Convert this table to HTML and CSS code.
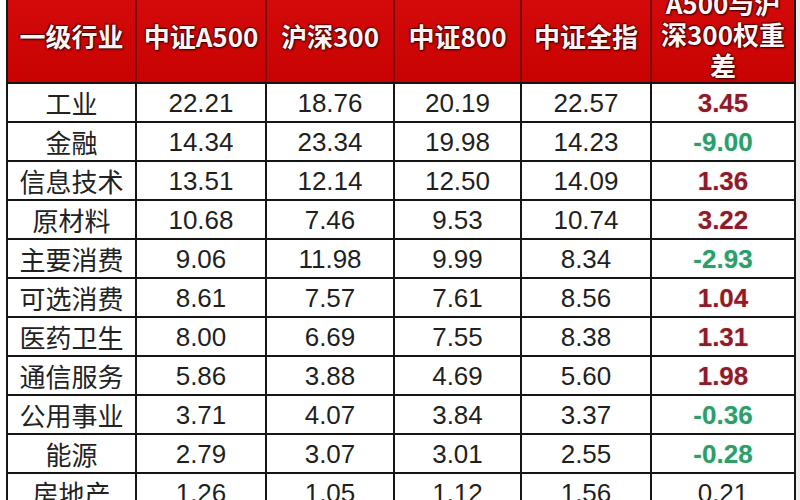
FILE: index.html
```html
<!DOCTYPE html>
<html lang="zh">
<head>
<meta charset="utf-8">
<link rel="stylesheet" href="styles.css">
</head>
<body>
<div class="page">
<table class="grid">
<colgroup>
<col class="c1"><col class="c2"><col class="c3"><col class="c4"><col class="c5"><col class="c6">
</colgroup>
<thead>
<tr>
<th><div class="hd">一级行业</div></th>
<th><div class="hd">中证A500</div></th>
<th><div class="hd">沪深300</div></th>
<th><div class="hd">中证800</div></th>
<th><div class="hd">中证全指</div></th>
<th><div class="hd multi">A500与沪<br>深300权重<br>差</div></th>
</tr>
</thead>
<tbody>
<tr><td>工业</td><td>22.21</td><td>18.76</td><td>20.19</td><td>22.57</td><td class="pos">3.45</td></tr>
<tr><td>金融</td><td>14.34</td><td>23.34</td><td>19.98</td><td>14.23</td><td class="neg">-9.00</td></tr>
<tr><td>信息技术</td><td>13.51</td><td>12.14</td><td>12.50</td><td>14.09</td><td class="pos">1.36</td></tr>
<tr><td>原材料</td><td>10.68</td><td>7.46</td><td>9.53</td><td>10.74</td><td class="pos">3.22</td></tr>
<tr><td>主要消费</td><td>9.06</td><td>11.98</td><td>9.99</td><td>8.34</td><td class="neg">-2.93</td></tr>
<tr><td>可选消费</td><td>8.61</td><td>7.57</td><td>7.61</td><td>8.56</td><td class="pos">1.04</td></tr>
<tr><td>医药卫生</td><td>8.00</td><td>6.69</td><td>7.55</td><td>8.38</td><td class="pos">1.31</td></tr>
<tr><td>通信服务</td><td>5.86</td><td>3.88</td><td>4.69</td><td>5.60</td><td class="pos">1.98</td></tr>
<tr><td>公用事业</td><td>3.71</td><td>4.07</td><td>3.84</td><td>3.37</td><td class="neg">-0.36</td></tr>
<tr><td>能源</td><td>2.79</td><td>3.07</td><td>3.01</td><td>2.55</td><td class="neg">-0.28</td></tr>
<tr><td>房地产</td><td>1.26</td><td>1.05</td><td>1.12</td><td>1.56</td><td class="plain">0.21</td></tr>
</tbody>
</table>
</div>
</body>
</html>
```
FILE: styles.css
```css
html, body {
  margin: 0;
  padding: 0;
  background: #ffffff;
  overflow: hidden;
}
.page {
  width: 800px;
  height: 500px;
  padding-left: 6px;
  box-sizing: border-box;
  overflow: hidden;
  background: linear-gradient(to right, #ffffff 0, #ffffff 794px, #ececec 794px);
}
.grid {
  border-collapse: collapse;
  table-layout: fixed;
  width: 788px;
  font-family: "Liberation Sans", "Noto Sans CJK SC", sans-serif;
  color: #1f1f1f;
}
.c1 { width: 129px; }
.c2 { width: 130px; }
.c3 { width: 128px; }
.c4 { width: 127px; }
.c5 { width: 130px; }
.c6 { width: 144px; }

.grid th {
  height: 82px;
  padding: 0;
  background: linear-gradient(to bottom, #d40a0a, #c80202);
  border-left: 2px solid #7a0505;
  border-right: 2px solid #7a0505;
  border-bottom: 2px solid #151515;
  border-top: none;
  vertical-align: middle;
  overflow: visible;
}
.grid th:first-child { border-left: 2px solid #151515; }
.grid th:last-child { border-right: 2px solid #151515; }
.hd {
  height: 82px;
  display: flex;
  align-items: center;
  justify-content: center;
  padding-bottom: 12px;
  box-sizing: border-box;
  font-family: "Noto Sans CJK SC", "Liberation Sans", sans-serif;
  font-weight: 700;
  font-size: 26px;
  line-height: 31px;
  color: #fff4f4;
  text-shadow: 0 0 2px #3a0000, 1px 1px 2px #3a0000, -1px -1px 1px #5a0000;
  white-space: nowrap;
}
.hd.multi {
  align-items: flex-end;
  padding-bottom: 2px;
  text-align: center;
}
.grid td {
  height: 37px;
  padding: 0;
  border: 2px solid #151515;
  text-align: center;
  vertical-align: middle;
  font-size: 26px;
  line-height: 30px;
  white-space: nowrap;
}
.grid td:first-child {
  font-family: "Noto Sans CJK SC", "Liberation Sans", sans-serif;
  font-size: 26px;
  color: #222222;
}
.grid td.pos {
  font-weight: 700;
  color: #8c1c2c;
  text-shadow: 0 0 2px rgba(230, 120, 120, 0.5);
}
.grid td.neg {
  font-weight: 700;
  color: #2f9d6a;
  text-shadow: 0 0 2px rgba(120, 220, 170, 0.5);
}
.grid td.plain {
  color: #1f1f1f;
}
```
